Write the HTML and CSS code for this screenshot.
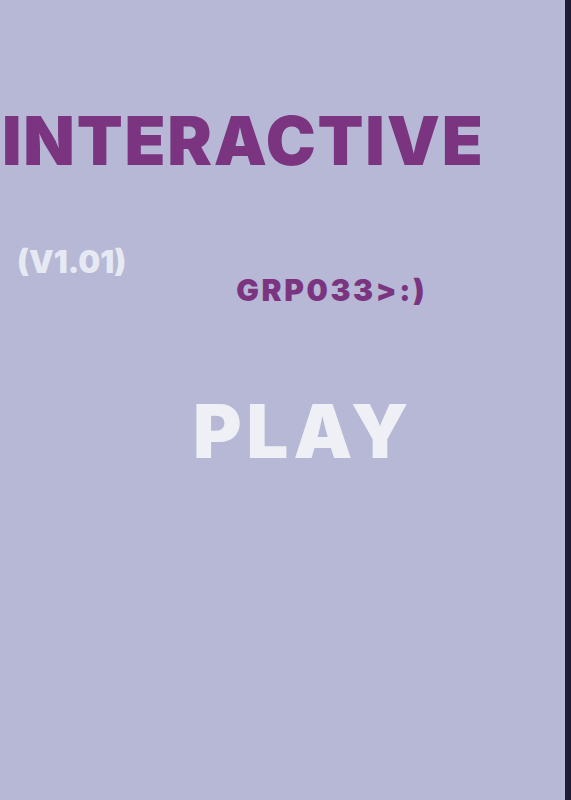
FILE: index.html
```html
<!DOCTYPE html>
<html>
<head>
<meta charset="utf-8">
<link rel="stylesheet" href="styles.css">
</head>
<body>
<main class="screen">
  <h1 class="title">INTERACTIVE</h1>
  <div class="meta">
    <span class="version">(V1.01)</span>
    <span class="group">GRP033&gt;:)</span>
  </div>
  <div class="play">PLAY</div>
</main>
</body>
</html>
```
FILE: styles.css
```css
html, body {
  margin: 0;
  padding: 0;
  background: #b6b8d6;
}
.screen {
  box-sizing: border-box;
  width: 571px;
  height: 800px;
  border-right: 6px solid #1e1b33;
  font-family: "Inter", "Liberation Sans", sans-serif;
  font-weight: 900;
  display: flex;
  flex-direction: column;
  align-items: flex-start;
}
.title {
  margin: 107px 0 0 2px;
  font-size: 67px;
  line-height: 1;
  font-weight: 900;
  letter-spacing: 1.8px;
  color: #7b3580;
}
.meta {
  margin-top: 72px;
  padding-left: 17px;
  display: flex;
  align-items: flex-start;
  gap: 110px;
}
.version {
  font-size: 31px;
  line-height: 1;
  color: #e6e9f2;
}
.group {
  margin-top: 29px;
  font-size: 30px;
  line-height: 1;
  letter-spacing: 2.6px;
  color: #7b3580;
}
.play {
  margin: 89px 0 0 193px;
  font-size: 74px;
  line-height: 1;
  letter-spacing: 5px;
  color: #eef0f5;
}
```
